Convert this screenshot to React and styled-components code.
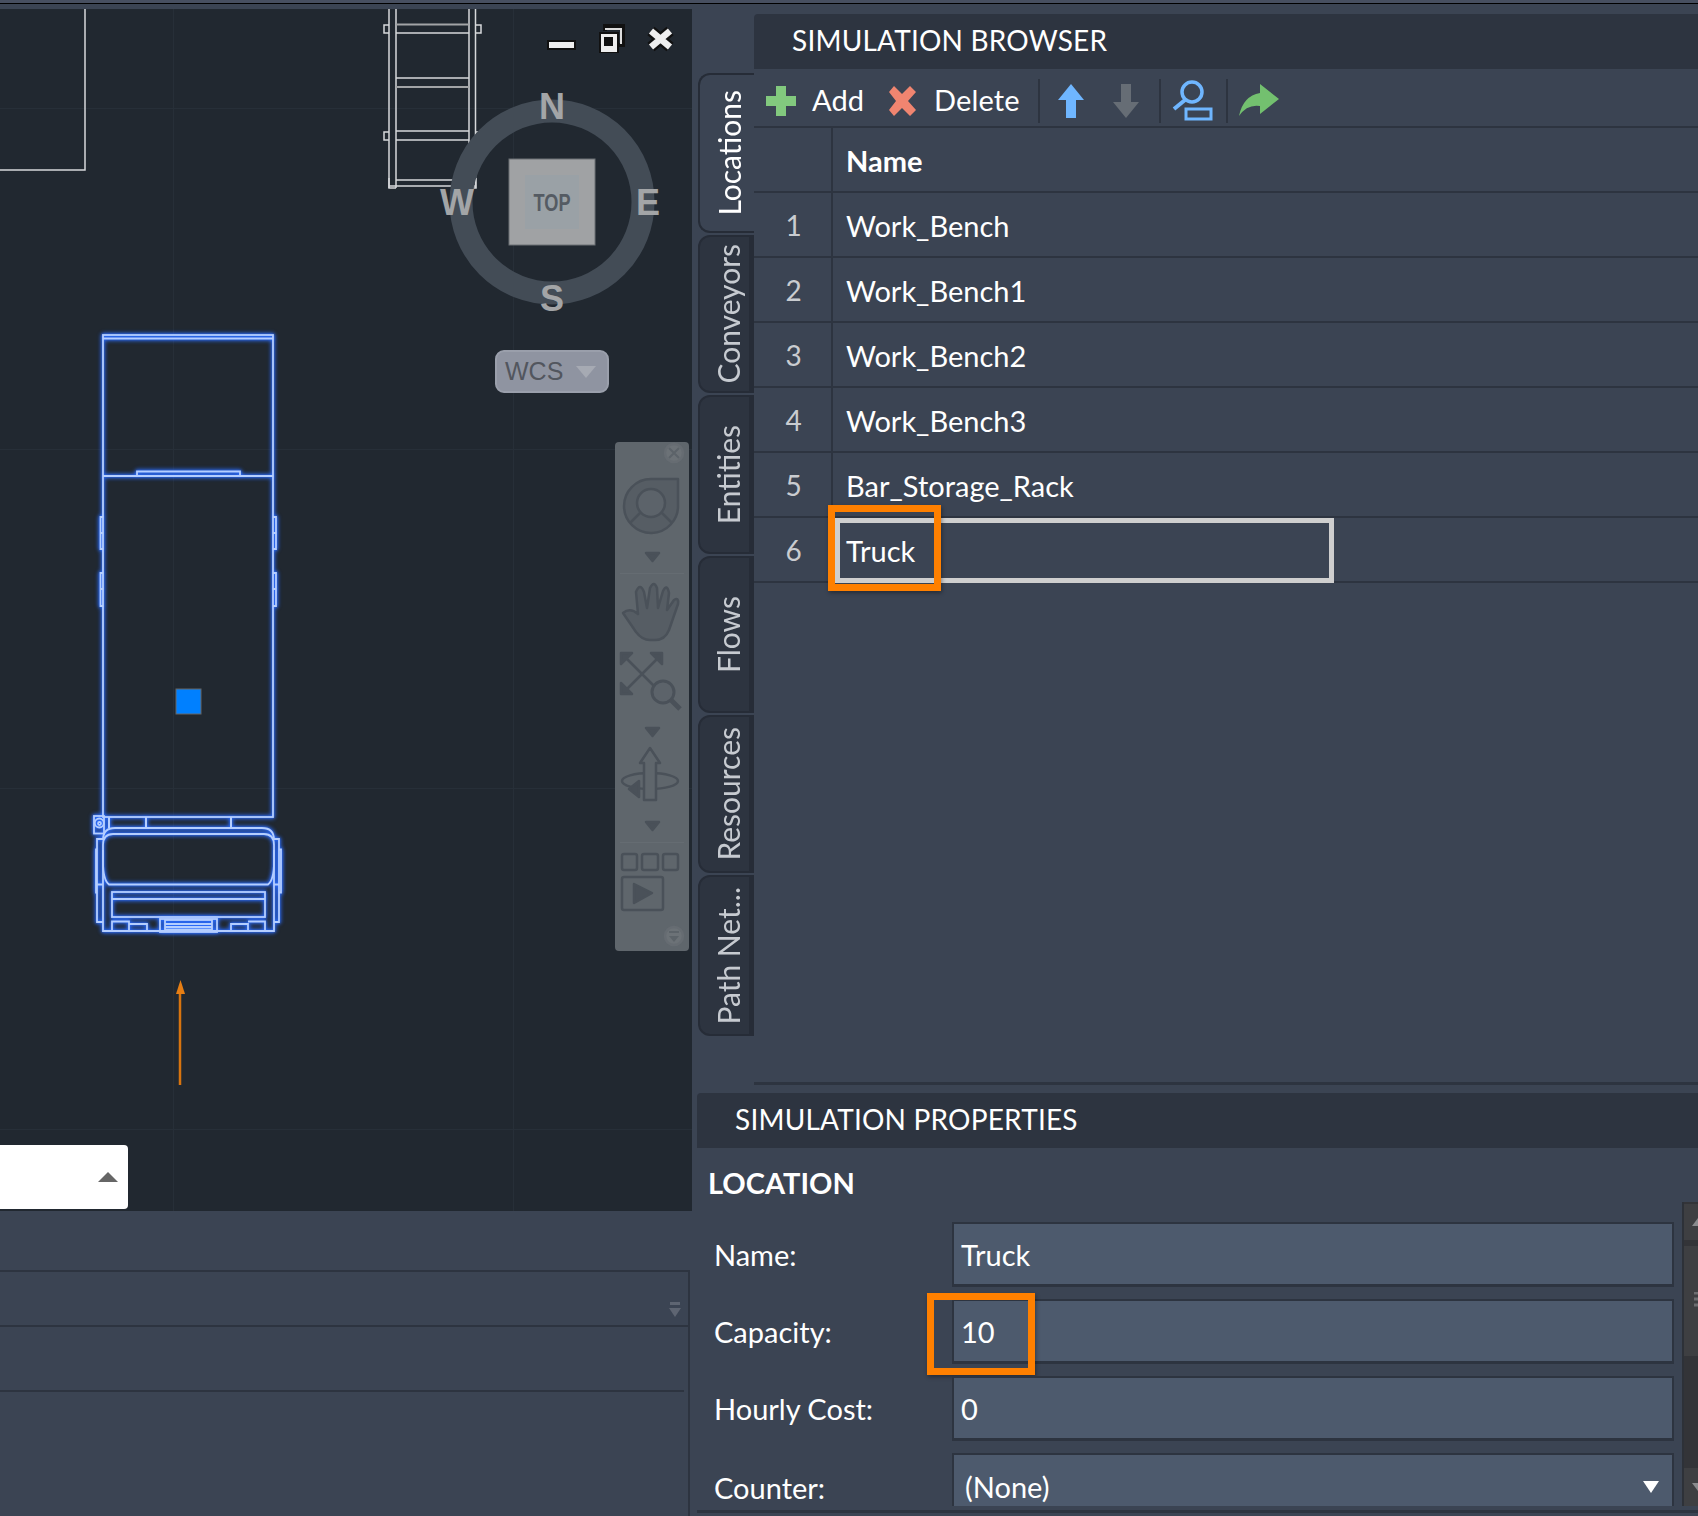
import React from "react";
import styled, { createGlobalStyle } from "styled-components";

const panel = "#3b4453";
const dark = "#2d3440";
const orange = "#ff8000";

const Global = createGlobalStyle`
  html, body { margin: 0; padding: 0; background: ${panel}; }
  * { box-sizing: border-box; }
`;

const Page = styled.div`
  width: 1698px;
  height: 1516px;
  overflow: hidden;
  background: ${panel};
  color: #fff;
  font-family: Lato, "Open Sans", sans-serif;
  font-size: 29px;
  display: flex;
  flex-direction: column;
`;

const TopStrip = styled.div`
  height: 4px;
  flex: none;
  background: #474f60;
  border-bottom: 1px solid #000;
`;

const Main = styled.div`
  flex: 1;
  display: grid;
  grid-template-columns: 692px 1fr;
  min-height: 0;
`;

const LeftCol = styled.div`
  display: flex;
  flex-direction: column;
  padding-top: 5px;
`;

const Viewport = styled.div`
  position: relative;
  height: 1202px;
  flex: none;
  background: #212830;
  overflow: hidden;
`;

const CadCanvas = styled.svg`
  display: block;
`;

const BlueGroup = styled.g`
  fill: none;
  stroke: #b4ceff;
  stroke-width: 1.8;
  filter: drop-shadow(0 0 2px #2a6cff) drop-shadow(0 0 1px #2a6cff);
`;

const Overlay = styled.svg`
  position: absolute;
  left: ${(p) => p.$x}px;
  top: ${(p) => p.$y - 9}px;
`;

const NavRail = styled.div`
  position: absolute;
  left: 615px;
  top: 433px;
  width: 74px;
  height: 509px;
  background: #5f666c;
  border-radius: 4px;
`;

const WcsButton = styled.div`
  position: absolute;
  left: 495px;
  top: 341px;
  width: 114px;
  height: 43px;
  border-radius: 9px;
  background: #8f94a1;
  border: 2px solid #9a9fab;
  display: flex;
  align-items: center;
  gap: 13px;
  padding-left: 8px;
  color: #52565e;
  font-family: "Liberation Sans", sans-serif;
  font-size: 25px;
`;

const WcsCaret = styled.span`
  width: 0;
  height: 0;
  border-left: 10px solid transparent;
  border-right: 10px solid transparent;
  border-top: 12px solid #a6aab3;
`;

const PopupBox = styled.div`
  position: absolute;
  left: 0;
  top: 1136px;
  width: 128px;
  height: 64px;
  background: #fff;
  border-radius: 0 4px 4px 0;
  display: flex;
  align-items: center;
  justify-content: flex-end;
  padding-right: 10px;
`;

const PopupCaret = styled.span`
  width: 0;
  height: 0;
  border-left: 10px solid transparent;
  border-right: 10px solid transparent;
  border-bottom: 10px solid #666;
`;

const CommandArea = styled.div`
  flex: 1;
  padding: 59px 2px 0 0;
`;

const CommandBox = styled.div`
  height: 100%;
  border-top: 2px solid ${dark};
  border-right: 2px solid ${dark};
`;

const CommandRow = styled.div`
  height: ${(p) => p.$h}px;
  border-bottom: 2px solid ${dark};
  margin-right: ${(p) => p.$inset}px;
  display: flex;
  justify-content: flex-end;
  padding: 30px 7px 0 0;
`;

const RightCol = styled.div`
  display: flex;
  flex-direction: column;
  min-width: 0;
`;

const BrowserArea = styled.div`
  height: 1081px;
  flex: none;
  display: flex;
  padding: 10px 0 0 5px;
`;

const TabStrip = styled.div`
  width: 57px;
  flex: none;
  padding: 59px 0 0 1px;
  display: flex;
  flex-direction: column;
  gap: 2px;
`;

const Tab = styled.div`
  height: ${(p) => p.$h}px;
  flex: none;
  border-radius: 12px 0 0 12px;
  background: ${(p) => (p.$active ? panel : dark)};
  border: 2px solid #262c37;
  border-right: ${(p) => (p.$active ? "none" : "5px solid #262c37")};
  color: ${(p) => (p.$active ? "#fff" : "#c6cad0")};
  display: flex;
  align-items: center;
  justify-content: center;
`;

const TabLabel = styled.span`
  writing-mode: vertical-rl;
  transform: rotate(180deg);
  white-space: nowrap;
  font-size: 30px;
  line-height: 1;
  margin-left: ${(p) => (p.$active ? "3px" : "7px")};
`;

const BrowserPane = styled.div`
  flex: 1;
  min-width: 0;
  border-bottom: 3px solid ${dark};
  position: relative;
`;

const PaneHeader = styled.div`
  height: 55px;
  background: ${dark};
  border-radius: 4px 0 0 0;
  padding: 0 0 4px ${(p) => p.$pad}px;
  display: flex;
  align-items: center;
  font-size: 28px;
  letter-spacing: 0.2px;
`;

const Toolbar = styled.div`
  height: 59px;
  border-bottom: 2px solid ${dark};
  display: flex;
  align-items: center;
  padding-top: 6px;
`;

const ToolIcon = styled.svg`
  display: block;
  flex: none;
  margin-left: ${(p) => p.$ml || 0}px;
`;

const ToolLabel = styled.span`
  margin: -2px 0 0 ${(p) => p.$ml}px;
  letter-spacing: 0.1px;
`;

const ToolSep = styled.span`
  width: 2px;
  height: 44px;
  margin-left: ${(p) => p.$ml}px;
  background: ${dark};
  flex: none;
`;

const Row = styled.div`
  height: 65px;
  position: relative;
  display: flex;
  border-bottom: 2px solid ${dark};
`;

const NumCell = styled.div`
  width: 79px;
  flex: none;
  border-right: 2px solid ${dark};
  display: flex;
  align-items: center;
  justify-content: center;
  color: #c9ccd0;
  padding: 1px 0 0 2px;
  font-size: 28px;
`;

const NameCell = styled.div`
  padding: 1px 0 0 13px;
  display: flex;
  align-items: center;
  font-weight: ${(p) => (p.$header ? 700 : 400)};
`;

const EditBox = styled.div`
  position: absolute;
  left: 81px;
  top: 0;
  width: 499px;
  height: 65px;
  border: 5px solid #cfcfcf;
`;

const Callout = styled.div`
  position: absolute;
  left: ${(p) => p.$x}px;
  top: ${(p) => p.$y}px;
  width: ${(p) => p.$w}px;
  height: ${(p) => p.$h}px;
  border: 7px solid ${orange};
  box-shadow: 1px 2px 4px rgba(0, 0, 0, 0.35);
`;

const PropsPane = styled.div`
  flex: 1;
  margin: 8px 0 0 5px;
  display: flex;
  flex-direction: column;
  min-height: 0;
`;

const PropsBody = styled.div`
  height: 358px;
  flex: none;
  display: flex;
  overflow: hidden;
`;

const FormCol = styled.div`
  width: 977px;
  flex: none;
`;

const PropsTitle = styled.div`
  height: 68px;
  margin-bottom: 6px;
  padding-left: 11px;
  display: flex;
  align-items: center;
  font-weight: 700;
  font-size: 29px;
`;

const FieldRow = styled.div`
  height: 65px;
  margin-bottom: 12px;
  padding-left: 17px;
  display: flex;
  position: relative;
`;

const FieldLabel = styled.div`
  width: 238px;
  flex: none;
  display: flex;
  align-items: center;
  padding-top: ${(p) => (p.$select ? 3 : 0)}px;
`;

const FieldBox = styled.div`
  width: 722px;
  flex: none;
  background: #4d5a6d;
  border: 2px solid ${dark};
  border-bottom-width: 3px;
  padding: ${(p) => (p.$select ? "3px 0 0 11px" : "0 0 0 7px")};
  display: flex;
  align-items: center;
  justify-content: space-between;
`;

const SelectCaret = styled.span`
  width: 0;
  height: 0;
  margin-right: 13px;
  border-left: 8px solid transparent;
  border-right: 8px solid transparent;
  border-top: 12px solid #fff;
`;

const ScrollBar = styled.div`
  width: 16px;
  height: 304px;
  margin: 54px 0 0 8px;
  flex: none;
  background: #333438;
  display: flex;
  flex-direction: column;
  justify-content: space-between;
  border-left: 2px solid #2d3138;
`;

const ScrollPart = styled.div`
  height: ${(p) => p.$h}px;
  background: #3e3f42;
  margin-top: ${(p) => p.$mt || 0}px;
  display: flex;
  align-items: center;
  justify-content: flex-end;
`;

const ScrollMark = styled.svg`
  display: block;
`;

const PropsFooter = styled.div`
  flex: 1;
  padding-top: 4px;
`;

const FooterLine = styled.div`
  height: 3px;
  background: ${dark};
`;

const tabs = [
  { name: "Locations", h: 160, active: true },
  { name: "Conveyors", h: 158 },
  { name: "Entities", h: 159 },
  { name: "Flows", h: 157 },
  { name: "Resources", h: 158 },
  { name: "Path Net...", h: 161 },
];

const rows = ["Work_Bench", "Work_Bench1", "Work_Bench2", "Work_Bench3", "Bar_Storage_Rack", "Truck"];

const fields = [
  { label: "Name:", value: "Truck" },
  { label: "Capacity:", value: "10", callout: true },
  { label: "Hourly Cost:", value: "0" },
  { label: "Counter:", value: "(None)", select: true },
];

function CadDrawing() {
  return (
    <CadCanvas width="692" height="1202" viewBox="0 9 692 1202">
      <g stroke="#272f38" strokeWidth="1">
        <path d="M173.500 9V1211M513.500 9V1211M0 108.500H692M0 449.500H692M0 788.500H692M0 1129.500H692" />
      </g>

      {/* rack in the top corner */}
      <g fill="none" stroke="#d6d8da" strokeWidth="1.500">
        <path d="M0 170H85V9" />
        <path d="M389 9V188M396 9V188M469 9V188M475.500 9V188" />
        <path d="M396 33H469M396 78H469M396 131H469M396 140H469M396 180H469M389 186H476" />
        <path d="M389 25H384V33H389M476 25H481V33H476M389 132H384V140H389M476 132H481V140H476" />
        <path d="M389 178V188H396M469 188H476V178" />
        <path d="M396 24.500H469M396 87H469" stroke="#a2a4a6" strokeWidth="2" />
      </g>

      {/* truck */}
      <BlueGroup>
        <rect x="103" y="335" width="170" height="482" />
        <path d="M103 338.500H273M103 476H273" />
        <path d="M137 476V471.500H240V476" />
        <path d="M103 517H100.500V549H103M100.500 533H103M103 573H100.500V606H103M100.500 589H103" />
        <path d="M273 517H276V549H273M276 533H273M273 573H276V606H273M276 589H273" />
        <rect x="94" y="816" width="10" height="17.500" />
        <circle cx="99.300" cy="823" r="4.500" />
        <circle cx="99.500" cy="823.500" r="1.500" />
        <path d="M109 817V828M146 817V828M231 817V828" strokeWidth="2" />
        <path d="M103 840Q103 828 115 828H262Q274 828 274 840" />
        <path d="M103 845Q103 834 113 834H264Q274 834 274 845V862Q274 880 268 884.500H109Q103 880 103 862Z" />
        <path d="M103 839H97V922H103M97 849.500H96V892.500H97M97 884.500H103" />
        <path d="M274 839H279V922H274M279 849.500H281V892.500H279M279 884.500H274" />
        <path d="M103 850V931H274V850" />
        <rect x="112" y="892" width="153" height="25" />
        <path d="M112 899H265" />
        <rect x="160" y="919" width="57" height="13" />
        <rect x="165" y="920" width="47" height="9.500" />
        <path d="M165 924H212M165 927H212" />
        <path d="M112 930V921.500H129V930M129 924H147V930M231 930V924H248V930M248 921.500H265V930" />
      </BlueGroup>
      <rect x="176" y="689" width="25" height="25" fill="#0080ff" stroke="#666" strokeWidth="1" />

      {/* ucs arrow */}
      <path d="M180 1085V990" stroke="#d8740f" strokeWidth="2.500" />
      <path d="M180.500 980L176 994H185Z" fill="#e67e14" />
    </CadCanvas>
  );
}

function WindowButtons() {
  return (
    <Overlay $x={544} $y={22} width="136" height="36" viewBox="544 22 136 36">
      <rect x="547" y="40" width="29" height="10" fill="#111" />
      <rect x="549" y="42" width="25" height="6" fill="#eee" />
      <path d="M605 31V26H623V45H617" fill="none" stroke="#111" strokeWidth="4" />
      <path d="M605 29H621V44" fill="none" stroke="#ddd" strokeWidth="2" />
      <rect x="599" y="32" width="20" height="21" fill="#111" />
      <rect x="601" y="34" width="16" height="18" fill="#eee" />
      <rect x="604" y="37" width="9" height="9" fill="#111" />
      <path d="M651 31L670 47M670 31L651 47" stroke="#111" strokeWidth="11" />
      <path d="M651 31L670 47M670 31L651 47" stroke="#eee" strokeWidth="6.500" />
    </Overlay>
  );
}

function ViewCube() {
  const letter = { fontFamily: "Liberation Sans", fontWeight: 700, fontSize: 36, fill: "#a3a5a7", textAnchor: "middle" };
  return (
    <Overlay $x={436} $y={85} width="230" height="240" viewBox="436 85 230 240">
      <circle cx="552" cy="202" r="91" fill="none" stroke="#434c56" strokeWidth="23" />
      <rect x="509" y="159" width="86" height="86" fill="#a0a2a4" stroke="#6c7074" strokeWidth="1" />
      <rect x="525" y="175" width="54" height="54" fill="#9aa1a6" />
      <text x="552" y="211" textAnchor="middle" fontFamily="Liberation Sans" fontWeight="700" fontSize="24" fill="#555b63" textLength="37" lengthAdjust="spacingAndGlyphs">TOP</text>
      <text x="552" y="119" {...letter}>N</text>
      <text x="457" y="215" {...letter}>W</text>
      <text x="648" y="215" {...letter}>E</text>
      <text x="552" y="311" {...letter}>S</text>
    </Overlay>
  );
}

function NavIcons() {
  return (
    <svg width="74" height="509" viewBox="615 442 74 509" fill="none" stroke="#4a5159" strokeWidth="2.500" strokeLinejoin="round">
      <path d="M620 573.500H684M620 842.500H684" stroke="#656c72" strokeWidth="1" />
      <circle cx="674" cy="453" r="9" fill="#6c7277" stroke="#666c72" />
      <path d="M669 448L679 458M679 448L669 458" stroke="#5c6369" strokeWidth="2" />

      <path d="M651 479H678V505A27 27 0 1 1 651 479Z" fill="#565d64" />
      <circle cx="651" cy="503" r="14" fill="#5c636a" />
      <path d="M640 513L630 523M662 513L672 523" />
      <path d="M646 553H659L652.500 561Z" fill="#4a5159" />

      <path d="M623 613Q630 607 638 614L636 592Q640 582 644 592L647 608L650 588Q654 580 657 588L658 608L663 591Q667 583 669 593L667 610L674 600Q679 597 678 604L669 630Q665 640 655 640H650Q642 640 636 632Z" fill="#565d64" />

      <path d="M624 656L662 694M660 656L624 692" strokeWidth="2.500" />
      <path d="M621 653H632L621 664ZM662 653H651L662 664ZM621 694H632L621 683Z" fill="#4a5159" />
      <circle cx="663" cy="692" r="11" fill="#5c636a" strokeWidth="3" />
      <path d="M671 700L680 709" strokeWidth="5" />
      <path d="M646 728H659L652.500 736Z" fill="#4a5159" />

      <ellipse cx="650" cy="781" rx="28" ry="8" />
      <path d="M650 748L660 763H656V800H644V763H640Z" fill="#5f666c" />
      <path d="M629 789L639 781V797Z" fill="#4a5159" />
      <path d="M646 822H659L652.500 830Z" fill="#4a5159" />

      <rect x="622" y="854" width="15" height="16" rx="2" />
      <rect x="642" y="854" width="16" height="16" rx="2" />
      <rect x="663" y="854" width="15" height="16" rx="2" />
      <rect x="622" y="877" width="41" height="33" rx="2" />
      <path d="M634 884L652 893L634 903Z" fill="#4a5159" />

      <circle cx="674" cy="936" r="9" fill="#6c7277" stroke="#666c72" />
      <path d="M669 932H679" stroke="#5c6369" strokeWidth="2" />
      <path d="M669 936H679L674 942Z" fill="#5c6369" stroke="none" />
    </svg>
  );
}

function CollapseIcon() {
  return (
    <svg width="12" height="16" viewBox="0 0 12 16">
      <rect x="1" y="0" width="10" height="3" fill="#5e6572" />
      <path d="M0 6H12L6 15Z" fill="#5e6572" />
    </svg>
  );
}

function BrowserToolbar() {
  return (
    <Toolbar>
      <ToolIcon $ml={11} width="32" height="32" viewBox="0 0 32 32">
        <path d="M11 1H21V11H31V21H21V31H11V21H1V11H11Z" fill="#82c97e" />
      </ToolIcon>
      <ToolLabel $ml={15}>Add</ToolLabel>
      <ToolIcon $ml={22} width="32" height="32" viewBox="0 0 32 32">
        <path d="M3 7L8 1L16 9L24 1L30 7L22 16L30 25L24 31L16 23L8 31L3 25L10 16Z" fill="#f08570" />
      </ToolIcon>
      <ToolLabel $ml={16}>Delete</ToolLabel>
      <ToolSep $ml={18} />
      <ToolIcon $ml={17} width="28" height="36" viewBox="0 0 28 36">
        <path d="M14 1L27 17H19V35H9V17H1Z" fill="#6fb6ff" />
      </ToolIcon>
      <ToolIcon $ml={27} width="28" height="36" viewBox="0 0 28 36">
        <path d="M14 35L27 19H19V1H9V19H1Z" fill="#666d75" />
      </ToolIcon>
      <ToolSep $ml={19} />
      <ToolIcon $ml={11} width="41" height="41" viewBox="0 0 41 41">
        <circle cx="20" cy="12" r="10" fill="none" stroke="#6fb6ff" strokeWidth="3.500" />
        <path d="M13 20L2 29" stroke="#6fb6ff" strokeWidth="4" />
        <rect x="14" y="29" width="25" height="10" fill="none" stroke="#6fb6ff" strokeWidth="3" />
      </ToolIcon>
      <ToolSep $ml={13} />
      <ToolIcon $ml={11} width="40" height="34" viewBox="0 0 40 34">
        <path d="M40 15L21 0V9Q4 12 0 32Q8 20 21 22V30Z" fill="#73c06f" />
      </ToolIcon>
    </Toolbar>
  );
}

export default function App() {
  return (
    <Page>
      <Global />
      <TopStrip />
      <Main>
        <LeftCol>
          <Viewport>
            <CadDrawing />
            <WindowButtons />
            <ViewCube />
            <WcsButton>
              WCS
              <WcsCaret />
            </WcsButton>
            <NavRail>
              <NavIcons />
            </NavRail>
            <PopupBox>
              <PopupCaret />
            </PopupBox>
          </Viewport>
          <CommandArea>
            <CommandBox>
              <CommandRow $h={55} $inset={0}>
                <CollapseIcon />
              </CommandRow>
              <CommandRow $h={65} $inset={4} />
            </CommandBox>
          </CommandArea>
        </LeftCol>

        <RightCol>
          <BrowserArea>
            <TabStrip>
              {tabs.map((t) => (
                <Tab key={t.name} $h={t.h} $active={t.active}>
                  <TabLabel $active={t.active}>{t.name}</TabLabel>
                </Tab>
              ))}
            </TabStrip>
            <BrowserPane>
              <PaneHeader $pad={38}>SIMULATION BROWSER</PaneHeader>
              <BrowserToolbar />
              <Row>
                <NumCell />
                <NameCell $header>Name</NameCell>
              </Row>
              {rows.map((name, i) => (
                <Row key={name}>
                  <NumCell>{i + 1}</NumCell>
                  <NameCell>{name}</NameCell>
                  {name === "Truck" && (
                    <>
                      <EditBox />
                      <Callout $x={74} $y={-13} $w={113} $h={86} />
                    </>
                  )}
                </Row>
              ))}
            </BrowserPane>
          </BrowserArea>

          <PropsPane>
            <PaneHeader $pad={38}>SIMULATION PROPERTIES</PaneHeader>
            <PropsBody>
              <FormCol>
                <PropsTitle>LOCATION</PropsTitle>
                {fields.map((f) => (
                  <FieldRow key={f.label}>
                    <FieldLabel $select={f.select}>{f.label}</FieldLabel>
                    <FieldBox $select={f.select}>
                      {f.value}
                      {f.select && <SelectCaret />}
                    </FieldBox>
                    {f.callout && <Callout $x={230} $y={-6} $w={108} $h={82} />}
                  </FieldRow>
                ))}
              </FormCol>
              <ScrollBar>
                <div>
                  <ScrollPart $h={36} $mt={2}>
                    <ScrollMark width="6" height="8" viewBox="0 0 6 8">
                      <path d="M6 0V8H0Z" fill="#8a8b8e" />
                    </ScrollMark>
                  </ScrollPart>
                  <ScrollPart $h={110} $mt={6}>
                    <ScrollMark width="4" height="18" viewBox="0 0 4 18">
                      <path d="M0 1H4M0 7H4M0 13H4" stroke="#6c6d70" strokeWidth="3" />
                    </ScrollMark>
                  </ScrollPart>
                </div>
                <ScrollPart $h={38}>
                  <ScrollMark width="6" height="8" viewBox="0 0 6 8">
                    <path d="M0 0H6V8Z" fill="#8a8b8e" />
                  </ScrollMark>
                </ScrollPart>
              </ScrollBar>
            </PropsBody>
            <PropsFooter>
              <FooterLine />
            </PropsFooter>
          </PropsPane>
        </RightCol>
      </Main>
    </Page>
  );
}
